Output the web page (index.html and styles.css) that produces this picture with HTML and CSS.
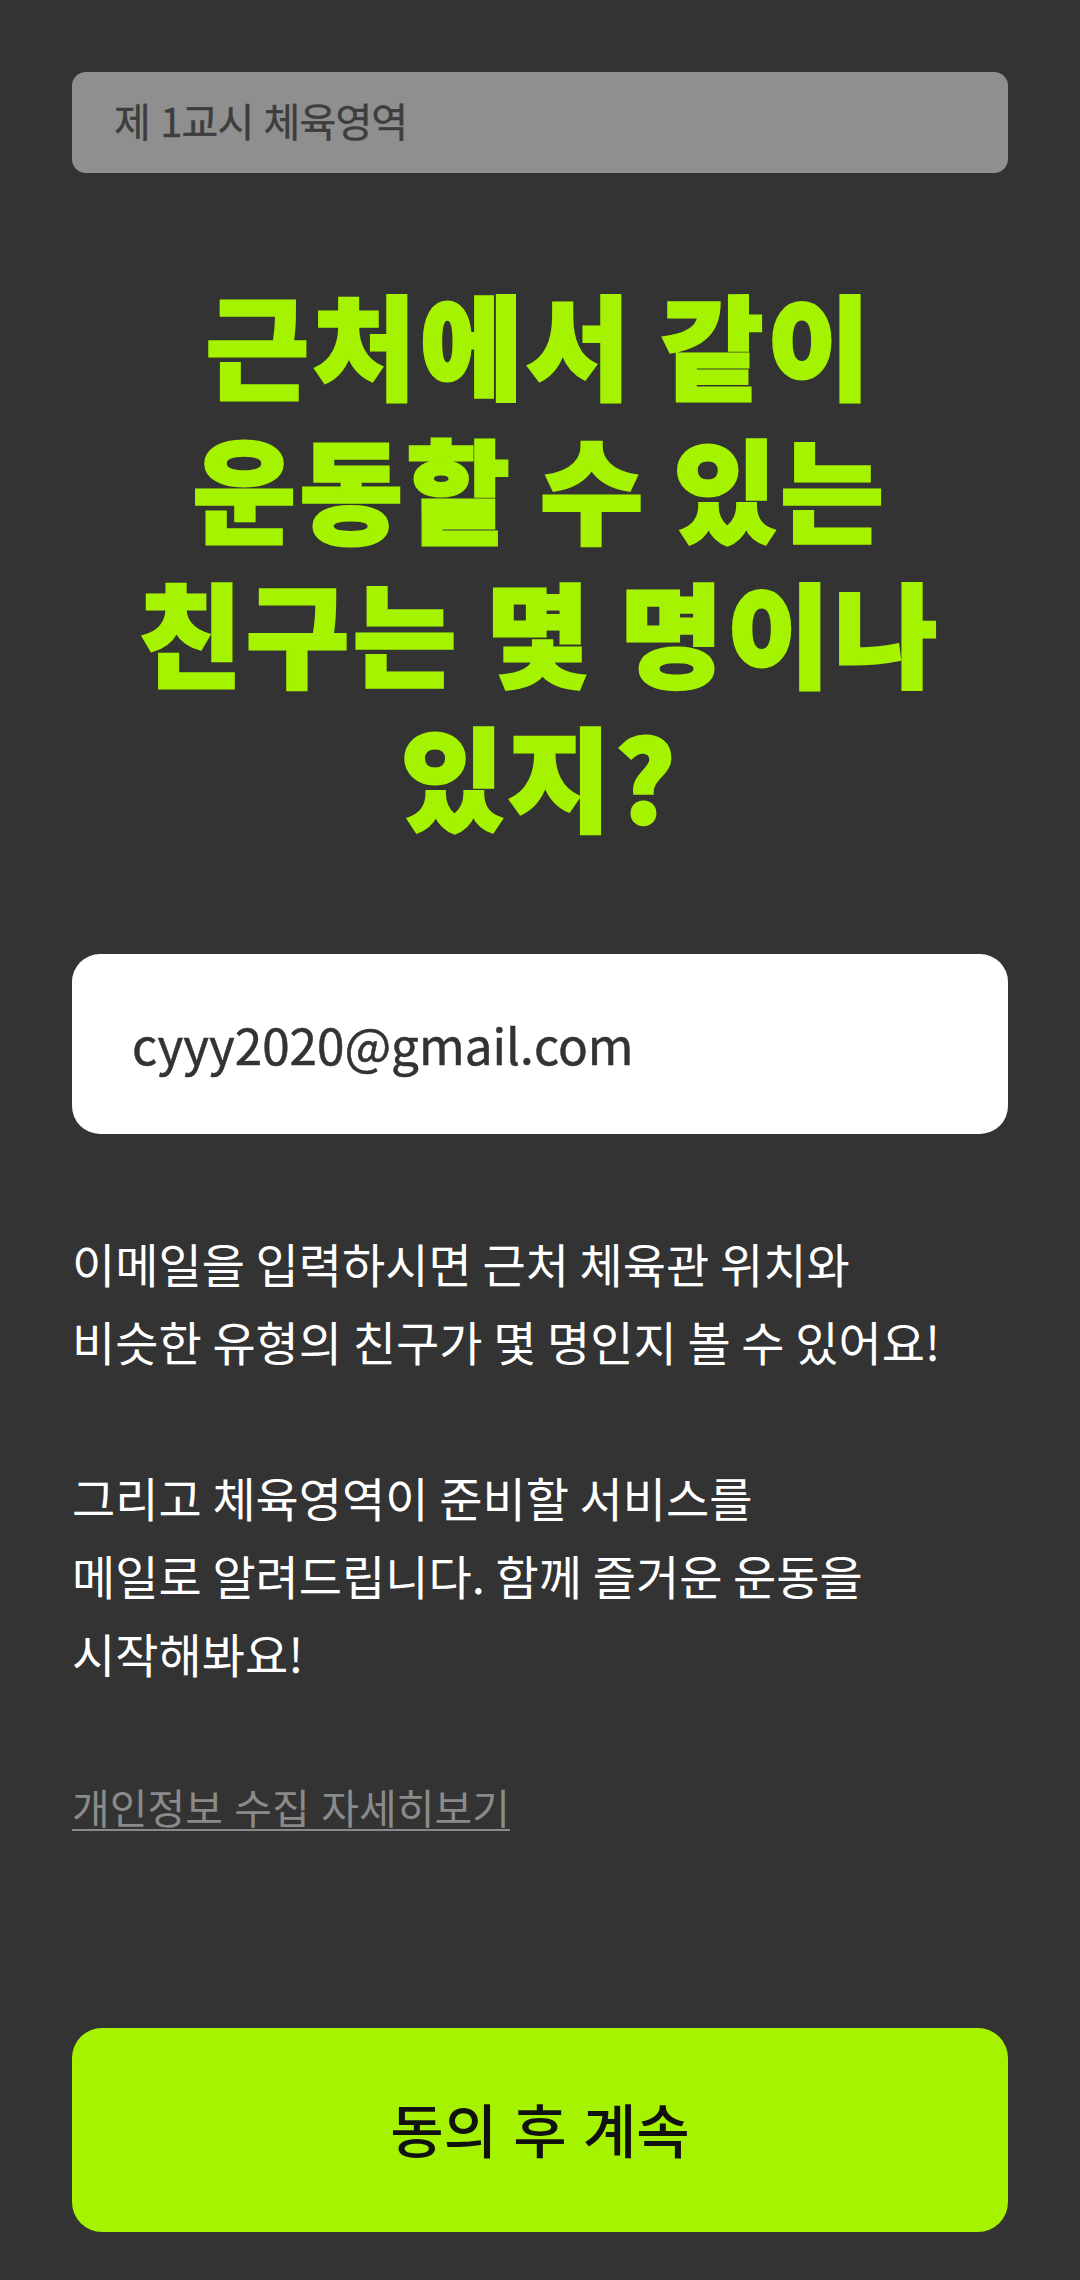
FILE: index.html
```html
<!DOCTYPE html>
<html lang="ko">
<head>
  <meta charset="UTF-8" />
  <meta name="viewport" content="width=device-width, initial-scale=1.0"/>
  <title>체육영역</title>
  <link rel="stylesheet" href="styles.css">
</head>
<body>
  <main class="page">
    <div class="subject">제 1교시 체육영역</div>
    <h1 class="question">근처에서 같이<br>운동할 수 있는<br>친구는 몇 명이나<br>있지?</h1>
    <div class="email">cyyy2020@gmail.com</div>
    <p class="notice">이메일을 입력하시면 근처 체육관 위치와<br>비슷한 유형의 친구가 몇 명인지 볼 수 있어요!</p>
    <p class="notice">그리고 체육영역이 준비할 서비스를<br>메일로 알려드립니다. 함께 즐거운 운동을<br>시작해봐요!</p>
    <a class="privacy" href="#">개인정보 수집 자세히보기</a>
    <button class="continue">동의 후 계속</button>
  </main>
</body>
</html>
```

FILE: styles.css
```css
body {
  margin: 0;
  background: #333;
  font-family: "Noto Sans CJK KR", "Noto Sans", sans-serif;
}

.page {
  display: flex;
  flex-direction: column;
  align-items: flex-start;
  box-sizing: border-box;
  height: 2280px;
  padding: 72px 72px 48px;
}

.subject {
  box-sizing: border-box;
  width: 100%;
  height: 101px;
  padding: 0 0 6px 42px;
  display: flex;
  align-items: center;
  background: #8f8f8f;
  border-radius: 14px;
  color: #3d3d3d;
  font-size: 40px;
  letter-spacing: -0.9px;
  -webkit-text-stroke: 0.4px #3d3d3d;
}

.question {
  width: 100%;
  margin: 97px 0 0;
  color: #a5f300;
  font-size: 112px;
  font-weight: 900;
  letter-spacing: 4px;
  word-spacing: -9px;
  line-height: 144px;
  text-align: center;
  -webkit-text-stroke: 3px #a5f300;
}

.email {
  box-sizing: border-box;
  width: 100%;
  height: 180px;
  margin-top: 108px;
  padding: 0 0 2px 60px;
  display: flex;
  align-items: center;
  background: #fff;
  border-radius: 28px;
  color: #333;
  font-size: 49.4px;
  -webkit-text-stroke: 0.5px #333;
}

.notice {
  margin: 78px 0 0;
  color: #fff;
  font-size: 47px;
  line-height: 78px;
  word-spacing: -2.5px;
}

.email + .notice {
  margin-top: 90px;
}

.privacy {
  margin-top: 91px;
  color: #8a8a8a;
  font-size: 41px;
  line-height: 46px;
  text-decoration: none;
  border-bottom: 2px solid #8a8a8a;
}

.continue {
  width: 100%;
  height: 204px;
  margin-top: auto;
  padding-bottom: 6px;
  border: none;
  border-radius: 30px;
  background: #a5f300;
  color: #111;
  font-family: inherit;
  font-size: 58px;
  font-weight: 500;
}
```
